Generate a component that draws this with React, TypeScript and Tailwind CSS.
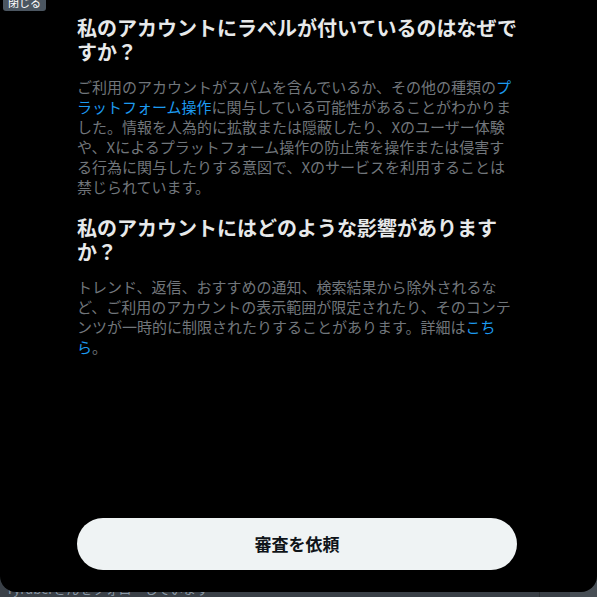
import React from 'react';

function Link({ children }: { children: React.ReactNode }) {
  return <span className="text-[#1d9bf0]">{children}</span>;
}

export default function App() {
  return (
    <div className="relative h-[597px] w-[597px] overflow-hidden bg-[#3a4047] font-['Noto_Sans_CJK_JP',sans-serif]">
      {/* page behind the dialog, only its last strip shows */}
      <div className="absolute left-0 right-0 top-[581px] flex h-[16px] items-end">
        <span className="pl-[8px] text-[13px] leading-[17px] text-[#8b98a5]">ryruberさんをフォローしています</span>
        <div className="ml-auto flex h-full">
          <div className="w-px bg-[#2f3336]" />
          <div className="w-[30px]" />
          <div className="w-[27px] bg-[#474e55]" />
        </div>
      </div>

      {/* dialog */}
      <div className="absolute left-0 top-0 flex h-[592px] w-[597px] flex-col rounded-b-[16px] bg-black">
        <div className="ml-[77px] w-[440px] pt-[16px]">
          <h2 className="text-[20px] font-bold leading-6 text-[#e7e9ea]">
            私のアカウントにラベルが付いているのはなぜですか？
          </h2>
          <p className="mt-[13px] text-[15px] leading-5 text-[#71767b]">
            ご利用のアカウントがスパムを含んでいるか、その他の種類の<Link>プラットフォーム操作</Link>に関与している可能性があることがわかりました。情報を人為的に拡散または隠蔽したり、Xのユーザー体験や、Xによるプラットフォーム操作の防止策を操作または侵害する行為に関与したりする意図で、Xのサービスを利用することは禁じられています。
          </p>
          <h2 className="mt-[19px] text-[20px] font-bold leading-6 text-[#e7e9ea]">
            私のアカウントにはどのような影響がありますか？
          </h2>
          <p className="mt-[13px] text-[15px] leading-5 text-[#71767b]">
            トレンド、返信、おすすめの通知、検索結果から除外されるなど、ご利用のアカウントの表示範囲が限定されたり、そのコンテンツが一時的に制限されたりすることがあります。詳細は<Link>こちら</Link>。
          </p>
        </div>
        <div className="flex-1" />
        <div className="mb-[22px] ml-[77px] w-[440px]">
          <button className="flex h-[52px] w-full items-center justify-center rounded-full bg-[#eff3f4] text-[17px] font-bold text-[#0f1419]">
            審査を依頼
          </button>
        </div>
      </div>

      {/* tooltip */}
      <div className="absolute left-[3px] top-[-7px] rounded-[3px] bg-[#4b5661] px-[5px] text-[11px] leading-[18px] text-white">
        閉じる
      </div>
    </div>
  );
}
